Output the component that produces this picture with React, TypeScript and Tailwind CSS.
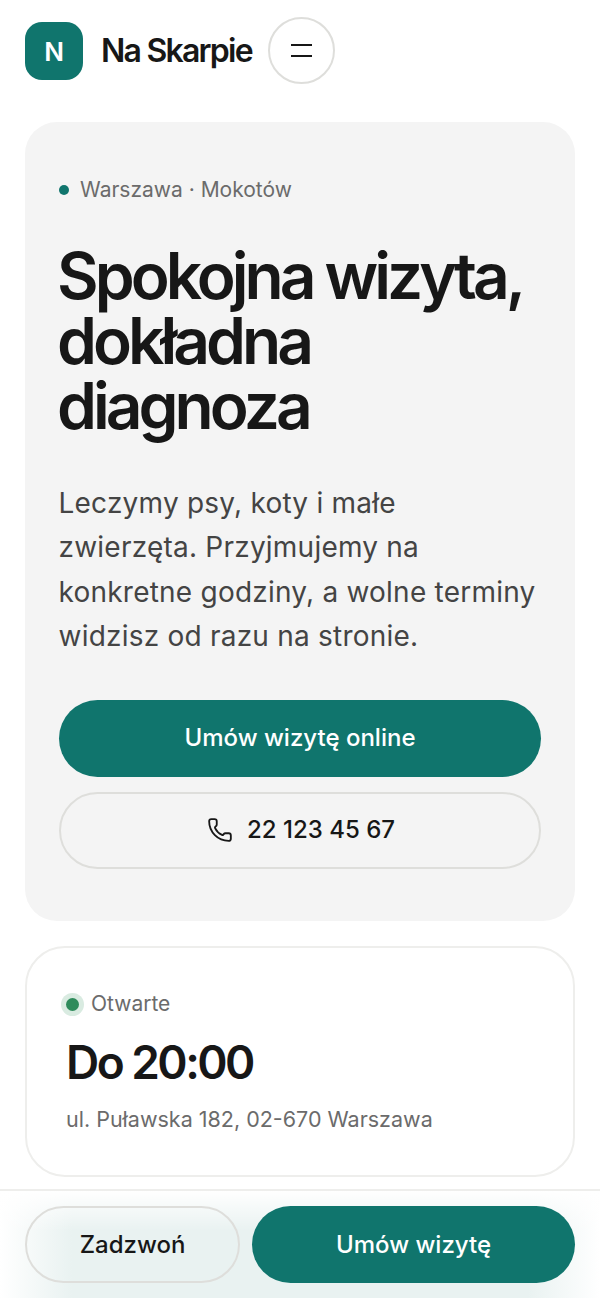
import React from 'react';
import { Phone } from 'lucide-react';

const App = () => {
  return (
    <div className="relative min-h-[1298px] overflow-hidden bg-white text-[#171717] font-['Inter',sans-serif]">
      <header className="flex items-center px-[25px] h-[102px]">
        <div className="flex items-center justify-center w-[58px] h-[58px] rounded-[17px] bg-[#10756d] text-white text-[26px] font-semibold">N</div>
        <span className="ml-[18px] text-[32px] font-semibold tracking-[-0.055em]">Na Skarpie</span>
        <button className="ml-[16px] -mt-[1px] flex items-center justify-center w-[67px] h-[67px] rounded-full border-2 border-[#dededb]">
          <span className="flex flex-col gap-[9px]">
            <span className="block w-[21px] h-[2px] bg-[#171717]" />
            <span className="block w-[21px] h-[2px] bg-[#171717]" />
          </span>
        </button>
      </header>

      <main className="px-[25px] pt-[20px]">
        <section className="h-[799px] rounded-[32px] bg-[#f4f4f4] px-[34px] pt-[55px]">
          <div className="flex items-center gap-[11px] h-[26px] text-[21px] text-[#6b6b6b]">
            <span className="w-[10px] h-[10px] rounded-full bg-[#10756d]" />
            Warszawa · Mokotów
          </div>
          <h1 className="mt-[40px] -ml-[2px] text-[64px] leading-[65px] font-semibold tracking-[-0.062em]">
            Spokojna wizyta,<br />dokładna<br />diagnoza
          </h1>
          <p className="mt-[43px] -ml-[0.5px] text-[28px] leading-[44.4px] tracking-[0.008em] text-[#444444]">
            Leczymy psy, koty i małe<br />zwierzęta. Przyjmujemy na<br />konkretne godziny, a wolne terminy<br />widzisz od razu na stronie.
          </p>
          <button className="mt-[41px] flex items-center justify-center w-full h-[77px] rounded-full bg-[#10756d] text-white text-[24px] font-medium">
            Umów wizytę online
          </button>
          <button className="mt-[15px] flex items-center justify-center gap-[14px] pl-[2px] w-full h-[77px] rounded-full border-2 border-[#dededb] text-[24px] font-medium">
            <Phone className="w-[26px] h-[26px]" strokeWidth={1.7} />
            22 123 45 67
          </button>
        </section>

        <section className="mt-[25px] h-[231px] rounded-[40px] border-2 border-[#eeeeec] px-[39px] pt-[43px]">
          <div className="flex items-center gap-[12px] h-[26px] text-[21px] text-[#6b6b6b]">
            <span className="w-[13px] h-[13px] rounded-full bg-[#2e8b5b] shadow-[0_0_0_5px_#d9ebe1]" />
            Otwarte
          </div>
          <div className="mt-[16px] text-[46px] leading-[58px] font-semibold tracking-[-0.055em]">Do 20:00</div>
          <div className="mt-[12px] text-[21.5px] leading-[32px] text-[#6b6b6b]">ul. Puławska 182, 02-670 Warszawa</div>
        </section>
      </main>

      <div className="fixed inset-x-0 bottom-0 h-[109px] border-t-2 border-[#eeeeec] bg-white">
        <div className="absolute inset-0 bg-[linear-gradient(to_right,#ffffff,#e9f2f1_12%,#e9f2f1_88%,#ffffff)]" />
        <div className="absolute inset-x-0 top-0 h-[40px] bg-gradient-to-b from-white to-transparent" />
        <div className="relative flex gap-[12px] px-[25px] pt-[15px]">
          <button className="w-[215px] h-[77px] rounded-full border-2 border-[#dededb] text-[24px] font-medium">Zadzwoń</button>
          <button className="flex-1 h-[77px] rounded-full bg-[#10756d] text-white text-[24px] font-medium">Umów wizytę</button>
        </div>
      </div>
    </div>
  );
};

export default App;
